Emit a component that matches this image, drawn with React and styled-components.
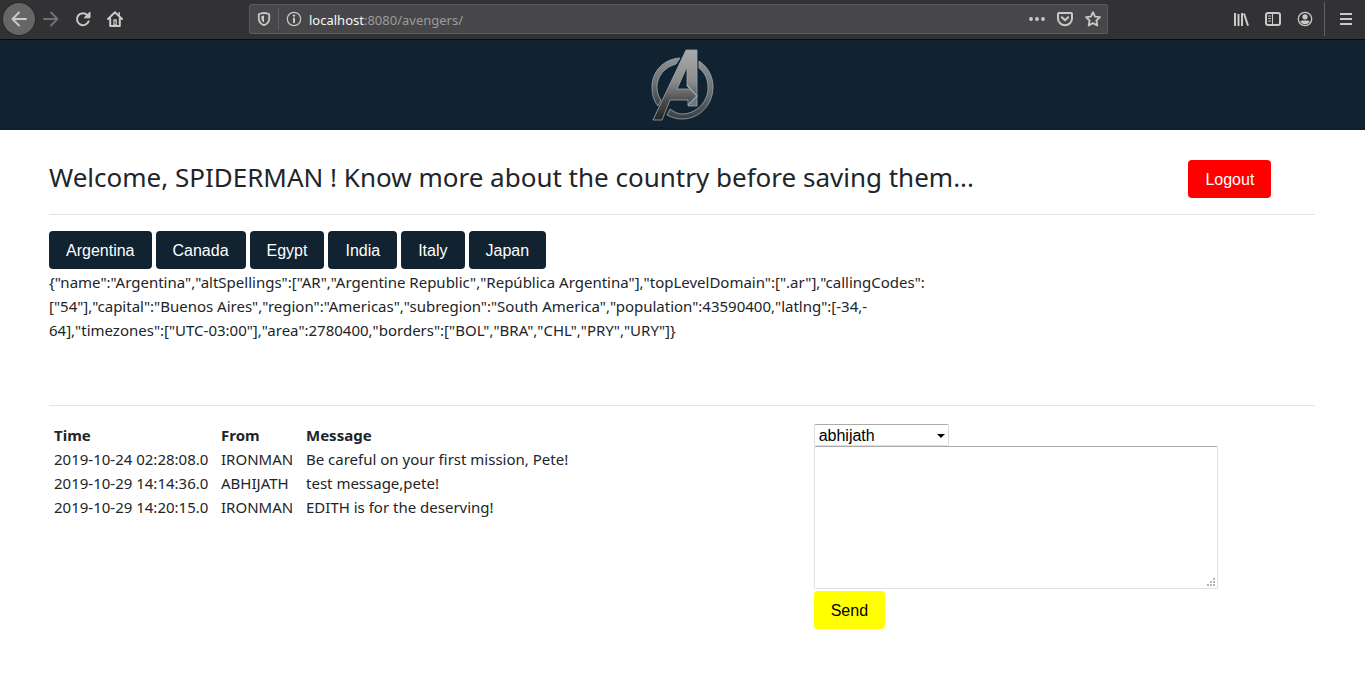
import React, { useState } from "react";
import styled, { createGlobalStyle } from "styled-components";

const navy = "#112231";
const sans = '"Liberation Sans", Arial, sans-serif';

const GlobalStyle = createGlobalStyle`
  *, *::before, *::after { box-sizing: border-box; }
  body {
    margin: 0;
    background: #fff;
    color: #212529;
    font: 400 15px/24px "Noto Sans", "Segoe UI", sans-serif;
  }
`;

const Toolbar = styled.nav`
  display: flex;
  align-items: center;
  height: 40px;
  padding: 0 11px 2px 3px;
  background: #323234;
  border-bottom: 1px solid #0c0c0d;
`;

const Group = styled.div`
  display: flex;
  flex: ${(p) => (p.$grow ? "1 1 0" : "none")};
  justify-content: ${(p) => (p.$end ? "flex-end" : "flex-start")};
  align-items: center;
`;

const IconButton = styled.button`
  display: grid;
  place-items: center;
  flex: none;
  width: ${(p) => p.$width || 32}px;
  height: 32px;
  padding: 0;
  border: 0;
  border-radius: 50%;
  background: ${(p) => (p.$round ? "#666667" : "transparent")};
  box-shadow: ${(p) => (p.$round ? "0 0 0 1px #29292b" : "none")};
  color: ${(p) => (p.$dim ? "#727274" : "#c9c9ca")};

  svg { display: block; }
`;

const AddressBar = styled.div`
  display: flex;
  align-items: center;
  flex: 0 1 859px;
  min-width: 0;
  height: 30px;
  border: 1px solid #5c5c5e;
  border-radius: 2px;
  background: #474749;
`;

const Divider = styled.span`
  flex: none;
  width: 1px;
  height: ${(p) => (p.$tall ? 34 : 22)}px;
  margin: ${(p) => (p.$tall ? "0 13px 0 3px" : "0")};
  background: #5f5f64;
`;

const Address = styled.a`
  flex: 1;
  min-width: 0;
  color: #9b9b9d;
  font-size: 13px;
  line-height: 20px;
  padding-top: 2px;
  text-decoration: none;
`;

const Host = styled.span`
  color: #f9f9fa;
`;

const Banner = styled.header`
  display: flex;
  justify-content: center;
  align-items: center;
  height: 90px;
  background: ${navy};
  box-shadow: inset 0 -3px #0f1f2d;
`;

const Page = styled.main`
  padding: 30px 50px 60px 49px;
`;

const Columns = styled.div`
  display: flex;
  align-items: flex-start;
`;

const Column = styled.div`
  flex: 0 0 ${(p) => p.$share}%;
  min-width: 0;
`;

const Title = styled.h1`
  margin: 0;
  color: #212529;
  font-size: 26px;
  line-height: 34px;
  font-weight: 400;
`;

const Rule = styled.hr`
  margin: 16px 0;
  border: 0;
  border-top: 1px solid #e5e5e5;
`;

const Button = styled.button`
  display: block;
  height: 38px;
  padding: 2px 17px 0;
  border: 0;
  border-radius: 4px;
  background: ${(p) => p.$fill || navy};
  color: ${(p) => p.$ink || "#fff"};
  font: 16px/24px ${sans};
  cursor: pointer;
`;

const CountryList = styled.div`
  display: flex;
  gap: 4px;
`;

const CountryInfo = styled.div`
  width: 70%;
  min-height: 120px;
  padding-top: 1px;
`;

const Messages = styled.table`
  margin-top: 1px;
  border-collapse: collapse;

  th, td {
    padding: 0 5px;
    text-align: left;
    white-space: nowrap;
  }
  th { font-weight: 700; }
  th:nth-child(1) { width: 167px; }
  th:nth-child(2) { width: 85px; }
`;

const SendForm = styled.form`
  display: flex;
  flex-direction: column;
  align-items: flex-start;
  padding-top: 2px;
`;

const SelectWrap = styled.div`
  position: relative;
  width: 135px;

  svg {
    position: absolute;
    right: 4px;
    top: 10px;
    pointer-events: none;
  }
`;

const Select = styled.select`
  display: block;
  appearance: none;
  width: 100%;
  height: 22px;
  padding: 1px 20px 0 4px;
  border: 1px solid #dcdce2;
  border-top-color: #ababab;
  border-radius: 2px;
  background: #fff;
  color: #000;
  font: 16px/20px ${sans};
`;

const TextWrap = styled.div`
  position: relative;
  width: 404px;
  max-width: 100%;
  margin-bottom: 2px;

  svg {
    position: absolute;
    right: 3px;
    bottom: 3px;
    pointer-events: none;
  }
`;

const TextArea = styled.textarea`
  display: block;
  width: 100%;
  height: 143px;
  padding: 2px 4px;
  border: 1px solid #dfdfe4;
  border-top-color: #ababab;
  border-radius: 2px;
  background: #fff;
  resize: none;
  font: 16px/20px ${sans};
`;

const Icon = ({ size = 16, children, ...rest }) => (
  <svg
    width={size}
    height={size}
    viewBox="0 0 16 16"
    fill="none"
    stroke="currentColor"
    strokeWidth="2"
    strokeLinecap="round"
    strokeLinejoin="round"
    aria-hidden="true"
    {...rest}
  >
    {children}
  </svg>
);

const BackIcon = () => <Icon><path d="M15 8H1.5M8 1.5 1.5 8 8 14.5" /></Icon>;
const ForwardIcon = () => <Icon><path d="M1 8h13.5M8 1.5 14.5 8 8 14.5" /></Icon>;
const ReloadIcon = () => (
  <Icon>
    <path d="M13.6 10.4A6 6 0 1 1 12.4 4.1L14 5.7" />
    <path d="M15 1.3V6.8H9.5Z" fill="currentColor" strokeWidth="1" />
  </Icon>
);
const HomeIcon = () => (
  <Icon>
    <path d="M1 8 8 1.3 15 8M3.2 7.5V15H12.8V7.5" />
    <path d="M12.2 1.8V4.5" strokeWidth="1.5" />
    <path d="M7 9h2.2v5H7Z" strokeWidth="1.3" />
  </Icon>
);
const ShieldIcon = () => (
  <Icon size={14}>
    <path d="M8 1C5.8 1.2 3.8 1.7 2 2.5V7C2 10.6 4 13.5 8 15C12 13.5 14 10.6 14 7V2.5C12.2 1.7 10.2 1.2 8 1Z" />
    <path d="M8 4C6.8 4.1 5.8 4.4 5 4.7V7.3C5 9.3 6 10.9 8 12Z" fill="currentColor" stroke="none" />
  </Icon>
);
const InfoIcon = () => (
  <Icon>
    <circle cx="8" cy="8" r="6.7" strokeWidth="1.2" />
    <path d="M8 7.5V11.3" />
    <circle cx="8" cy="4.6" r="1.2" fill="currentColor" stroke="none" />
  </Icon>
);
const DotsIcon = () => (
  <Icon fill="currentColor" stroke="none">
    <circle cx="2" cy="8" r="1.9" />
    <circle cx="8" cy="8" r="1.9" />
    <circle cx="14" cy="8" r="1.9" />
  </Icon>
);
const PocketIcon = () => (
  <Icon>
    <path d="M2 2H14Q15 2 15 3V7.5A7 6.7 0 0 1 1 7.5V3Q1 2 2 2Z" />
    <path d="M4.8 6.2 8 9.3 11.2 6.2" />
  </Icon>
);
const StarIcon = () => (
  <Icon>
    <path
      strokeWidth="1.8"
      d="M8 1.2 10.1 5.6 15 6.2 11.4 9.5 12.3 14.5 8 12.1 3.7 14.5 4.6 9.5 1 6.2 5.9 5.6Z"
    />
  </Icon>
);
const LibraryIcon = () => (
  <Icon strokeLinecap="butt"><path d="M2 2V15M5.5 3V15M9 2V15M11 2.5 15 14.8" /></Icon>
);
const SidebarIcon = () => (
  <Icon>
    <rect x="1" y="2" width="14" height="12" rx="2" />
    <path d="M7.5 2V14M3.5 5H5.5M3.5 7.5H5.5M3.5 10H5.5" strokeWidth="1.1" />
  </Icon>
);
const AccountIcon = () => (
  <Icon>
    <circle cx="8" cy="8" r="6.7" strokeWidth="1.3" />
    <circle cx="8" cy="5.8" r="2.6" fill="currentColor" stroke="none" />
    <path d="M3.3 10.2C5 9 6 9.5 8 9.5S11 9 12.7 10.2C12 12 10.3 13.2 8 13.2S4 12 3.3 10.2Z" fill="currentColor" stroke="none" />
  </Icon>
);
const MenuIcon = () => (
  <Icon strokeLinecap="butt"><path d="M2 3H14M2 8H14M2 13H14" /></Icon>
);

const AvengersLogo = () => (
  <svg width="64" height="72" viewBox="1 0 64 72" role="img" aria-label="Avengers">
    <defs>
      <linearGradient id="steel" x1="0" y1="0" x2="0" y2="1">
        <stop offset="0" stopColor="#aaaaa9" />
        <stop offset="0.45" stopColor="#8c8c8c" />
        <stop offset="0.75" stopColor="#484848" />
        <stop offset="1" stopColor="#242424" />
      </linearGradient>
      <linearGradient id="ring" x1="0" y1="0" x2="0" y2="1">
        <stop offset="0" stopColor="#8d8f90" />
        <stop offset="0.5" stopColor="#6d7071" />
        <stop offset="1" stopColor="#3c3f41" />
      </linearGradient>
    </defs>
    <g stroke="#9aaab5" strokeWidth="0.8" strokeLinejoin="round">
      <path
        fill="url(#ring)"
        d="M30 9C13 10 2 23 2 38C2 46 4 52 8 57L11 51C8 47 7 43 7 38C7 27 15 18 26 15Z"
      />
      <path
        fill="url(#ring)"
        d="M49 12C58 18 63 27 63 38C63 56 49 70 32 70C26 70 21 68 17 66L20 60C24 63 28 65 32 65C46 65 58 53 58 39C58 30 55 24 49 19Z"
      />
      <path
        fill="url(#steel)"
        d="M36 1H47V47L37 37V18L27 40H40L47 47L38 56V51H20L12 71H3Z"
      />
      <path fill="#6f7476" d="M47 47V57H38V56Z" />
    </g>
    <path d="M37 36 47 47 38 56" fill="none" stroke="#86a9bf" strokeWidth="1.2" />
  </svg>
);

const countries = ["Argentina", "Canada", "Egypt", "India", "Italy", "Japan"];

const messages = [
  ["2019-10-24 02:28:08.0", "IRONMAN", "Be careful on your first mission, Pete!"],
  ["2019-10-29 14:14:36.0", "ABHIJATH", "test message,pete!"],
  ["2019-10-29 14:20:15.0", "IRONMAN", "EDITH is for the deserving!"],
];

const BrowserBar = () => (
  <Toolbar aria-label="Browser">
    <Group $grow>
      <IconButton $round aria-label="Back"><BackIcon /></IconButton>
      <IconButton $dim aria-label="Forward"><ForwardIcon /></IconButton>
      <IconButton aria-label="Reload"><ReloadIcon /></IconButton>
      <IconButton aria-label="Home"><HomeIcon /></IconButton>
    </Group>
    <AddressBar>
      <IconButton $width={28} aria-label="Tracking protection"><ShieldIcon /></IconButton>
      <Divider />
      <IconButton $width={30} aria-label="Site information"><InfoIcon /></IconButton>
      <Address href="#"><Host>localhost</Host>:8080/avengers/</Address>
      <IconButton $width={28} aria-label="Page actions"><DotsIcon /></IconButton>
      <IconButton $width={28} aria-label="Save to Pocket"><PocketIcon /></IconButton>
      <IconButton $width={28} aria-label="Bookmark"><StarIcon /></IconButton>
    </AddressBar>
    <Group $grow $end>
      <IconButton aria-label="Library"><LibraryIcon /></IconButton>
      <IconButton aria-label="Sidebars"><SidebarIcon /></IconButton>
      <IconButton aria-label="Account"><AccountIcon /></IconButton>
      <Divider $tall />
      <IconButton $width={16} aria-label="Menu"><MenuIcon /></IconButton>
    </Group>
  </Toolbar>
);

export default function App() {
  const [text, setText] = useState("");
  return (
    <>
      <GlobalStyle />
      <BrowserBar />
      <Banner><AvengersLogo /></Banner>
      <Page>
        <Columns>
          <Column $share={90}>
            <Title>Welcome, SPIDERMAN ! Know more about the country before saving them...</Title>
          </Column>
          <Column $share={10}><Button $fill="#f00">Logout</Button></Column>
        </Columns>
        <Rule />
        <CountryList>
          {countries.map((name) => <Button key={name}>{name}</Button>)}
        </CountryList>
        <CountryInfo>
          {'{"name":"Argentina","altSpellings":["AR","Argentine Republic","República Argentina"],"topLevelDomain":[".ar"],"callingCodes":["54"],"capital":"Buenos Aires","region":"Americas","subregion":"South America","population":43590400,"latlng":[-34,-'}
          <wbr />
          {'64],"timezones":["UTC-03:00"],"area":2780400,"borders":["BOL","BRA","CHL","PRY","URY"]}'}
        </CountryInfo>
        <Rule />
        <Columns>
          <Column $share={60.4}>
            <Messages>
              <thead>
                <tr><th>Time</th><th>From</th><th>Message</th></tr>
              </thead>
              <tbody>
                {messages.map(([time, from, body]) => (
                  <tr key={time}><td>{time}</td><td>{from}</td><td>{body}</td></tr>
                ))}
              </tbody>
            </Messages>
          </Column>
          <Column $share={39.6}>
            <SendForm onSubmit={(e) => e.preventDefault()}>
              <SelectWrap>
                <Select aria-label="Recipient" defaultValue="abhijath">
                  <option>abhijath</option>
                </Select>
                <svg width="8" height="4" viewBox="0 0 8 4" aria-hidden="true">
                  <path d="M0 0H8L4 4Z" fill="#000" />
                </svg>
              </SelectWrap>
              <TextWrap>
                <TextArea aria-label="Message" value={text} onChange={(e) => setText(e.target.value)} />
                <svg width="8" height="8" viewBox="0 0 8 8" aria-hidden="true">
                  <path d="M6 0h2v2H6zM3 3h2v2H3zM6 3h2v2H6zM0 6h2v2H0zM3 6h2v2H3zM6 6h2v2H6z" fill="#b5b5b5" />
                </svg>
              </TextWrap>
              <Button type="submit" $fill="#ff0" $ink="#000">Send</Button>
            </SendForm>
          </Column>
        </Columns>
      </Page>
    </>
  );
}
